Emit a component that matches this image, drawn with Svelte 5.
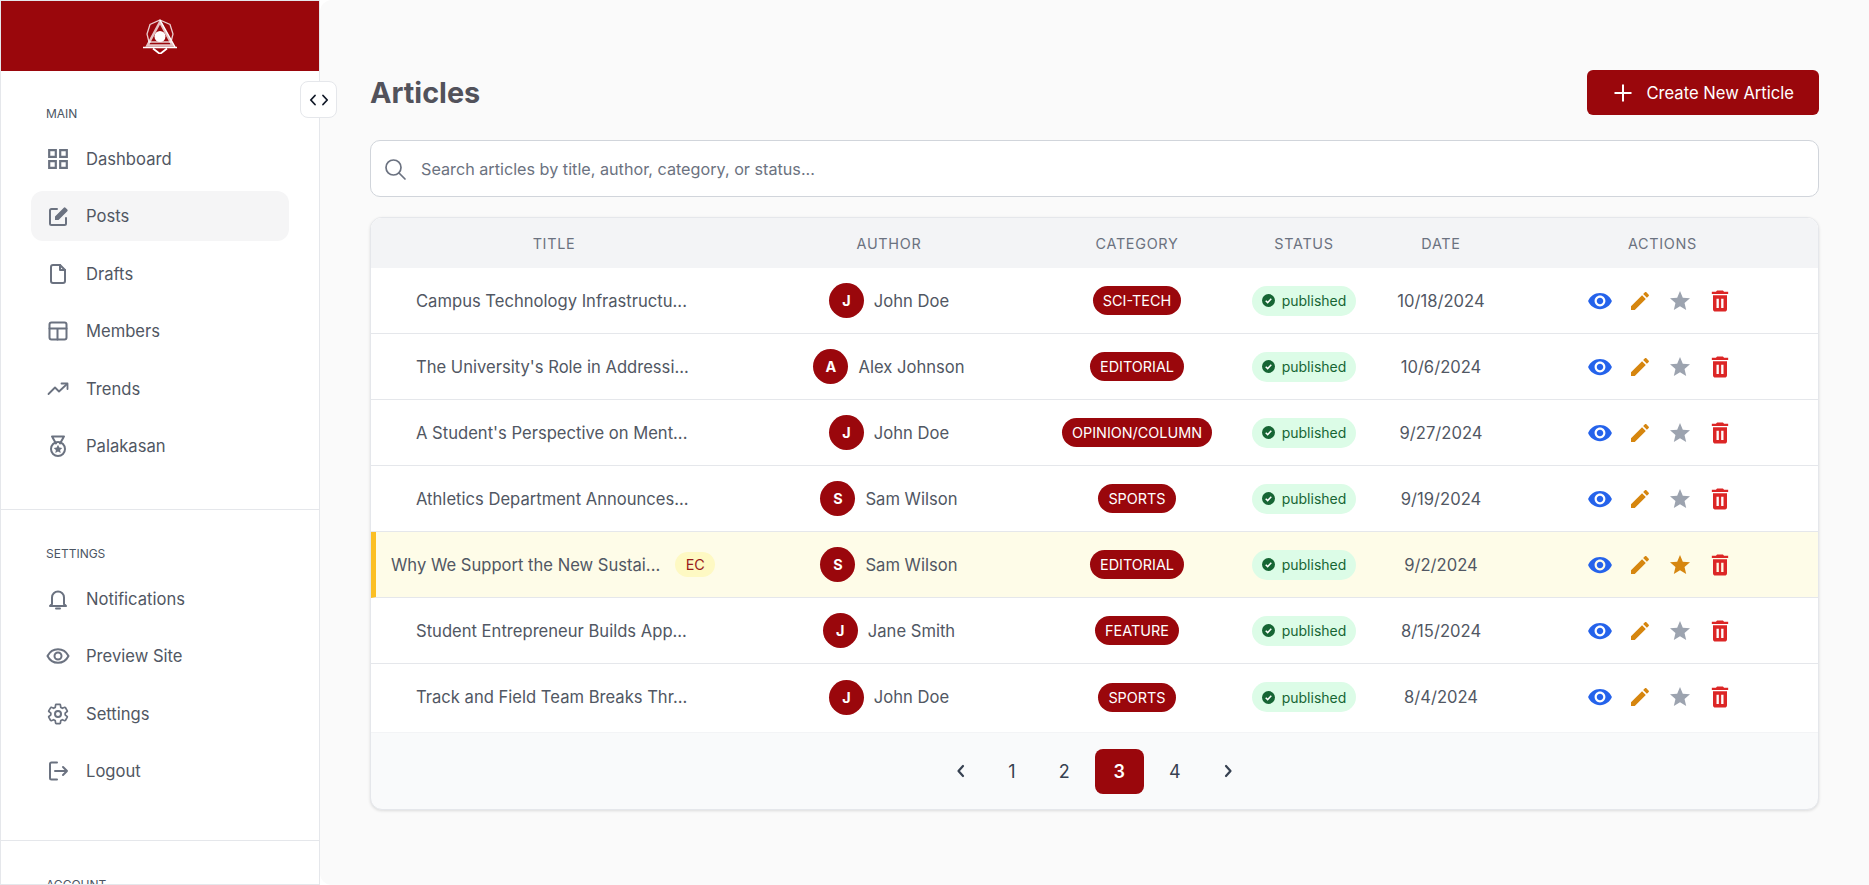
<script>
	const icons = {
		dashboard: '<path transform="translate(-1.2 -1.2) scale(1.1)" fill="currentColor" stroke="none" d="M3 3v8h8V3H3zm6 6H5V5h4v4zm-6 4v8h8v-8H3zm6 6H5v-4h4v4zm4-16v8h8V3h-8zm6 6h-4V5h4v4zm-6 4v8h8v-8h-8zm6 6h-4v-4h4v4z"/>',
		posts: '<path d="M11 5H5.500A1.500 1.500 0 0 0 4 6.500v13A1.500 1.500 0 0 0 5.500 21h13a1.500 1.500 0 0 0 1.500-1.500V14"/><path fill="currentColor" stroke="none" d="M9 12.500V16h3.500L21.300 7.200a1.200 1.200 0 0 0 0-1.700l-1.800-1.800a1.200 1.200 0 0 0-1.700 0z"/>',
		drafts: '<path d="M14 3H7a2 2 0 0 0-2 2v14a2 2 0 0 0 2 2h10a2 2 0 0 0 2-2V8z"/><path d="M14 3v5h5"/>',
		members: '<rect x="3.500" y="3.500" width="17" height="17" rx="2"/><path d="M3.500 9.500h17M11.500 9.500v11"/>',
		trends: '<path stroke-width="1.800" d="M2.500 17l6.500-6.500 4 4L21 7"/><path stroke-width="1.800" d="M15.500 6.500H21.500V12"/>',
		medal: '<path d="M6 2.500h12M6 2.500l4 7M18 2.500l-4 7"/><circle cx="12" cy="15" r="7"/><path fill="currentColor" stroke="none" d="M12 10.800l1.300 2.700 3 .4-2.200 2 .6 3-2.700-1.500-2.700 1.500.6-3-2.200-2 3-.4z"/>',
		bell: '<path d="M6 17V10.500a6 6 0 0 1 12 0V17l2 2H4z"/><path d="M10 21.500h4"/>',
		eye: '<path d="M1.500 12C3.800 7.500 7.500 5.200 12 5.200s8.200 2.300 10.500 6.800c-2.300 4.500-6 6.800-10.500 6.800S3.800 16.500 1.500 12z"/><circle cx="12" cy="12" r="3.500"/>',
		gear: '<path stroke-width="1.700" d="M19.140 12.940c.04-.3.06-.61.06-.94 0-.32-.02-.64-.07-.94l2.030-1.580c.18-.14.23-.41.12-.61l-1.920-3.320c-.12-.22-.37-.29-.59-.22l-2.390.96c-.5-.38-1.030-.7-1.620-.94l-.36-2.540c-.04-.24-.24-.41-.48-.41h-3.840c-.24 0-.43.17-.47.41l-.36 2.540c-.59.24-1.130.57-1.620.94l-2.390-.96c-.22-.08-.47 0-.59.22L2.740 8.870c-.12.21-.08.47.12.61l2.030 1.580c-.05.3-.09.63-.09.94s.02.64.07.94l-2.030 1.580c-.18.14-.23.41-.12.61l1.920 3.320c.12.22.37.29.59.22l2.390-.96c.5.38 1.030.7 1.620.94l.36 2.540c.05.24.24.41.48.41h3.840c.24 0 .44-.17.47-.41l.36-2.540c.59-.24 1.130-.56 1.620-.94l2.390.96c.22.08.47 0 .59-.22l1.920-3.320c.12-.22.07-.47-.12-.61l-2.010-1.580z"/><circle cx="12" cy="12" r="3"/>',
		logout: '<path d="M11 3.500H5.500A1.500 1.500 0 0 0 4 5v14a1.500 1.500 0 0 0 1.500 1.500H11"/><path d="M9 12h12M17 8l4 4-4 4"/>'
	};

	const mainNav = [
		{ label: 'Dashboard', icon: 'dashboard' },
		{ label: 'Posts', icon: 'posts', active: true },
		{ label: 'Drafts', icon: 'drafts' },
		{ label: 'Members', icon: 'members' },
		{ label: 'Trends', icon: 'trends' },
		{ label: 'Palakasan', icon: 'medal' }
	];

	const settingsNav = [
		{ label: 'Notifications', icon: 'bell' },
		{ label: 'Preview Site', icon: 'eye' },
		{ label: 'Settings', icon: 'gear' },
		{ label: 'Logout', icon: 'logout' }
	];

	const articles = [
		{ title: 'Campus Technology Infrastructu...', author: 'John Doe', category: 'SCI-TECH', date: '10/18/2024' },
		{ title: "The University's Role in Addressi...", author: 'Alex Johnson', category: 'EDITORIAL', date: '10/6/2024' },
		{ title: "A Student's Perspective on Ment...", author: 'John Doe', category: 'OPINION/COLUMN', date: '9/27/2024' },
		{ title: 'Athletics Department Announces...', author: 'Sam Wilson', category: 'SPORTS', date: '9/19/2024' },
		{ title: 'Why We Support the New Sustai...', author: 'Sam Wilson', category: 'EDITORIAL', date: '9/2/2024', featured: true },
		{ title: 'Student Entrepreneur Builds App...', author: 'Jane Smith', category: 'FEATURE', date: '8/15/2024' },
		{ title: 'Track and Field Team Breaks Thr...', author: 'John Doe', category: 'SPORTS', date: '8/4/2024' }
	];
</script>

{#snippet navList(items)}
	<ul class="nav-list">
		{#each items as item}
			<li class="nav-item" class:active={item.active}>
				<svg class="nav-icon" viewBox="0 0 24 24" fill="none" stroke="currentColor" stroke-width="2" stroke-linecap="round" stroke-linejoin="round">
					{@html icons[item.icon]}
				</svg>
				<span>{item.label}</span>
			</li>
		{/each}
	</ul>
{/snippet}

<div class="layout">
	<aside class="sidebar">
		<div class="brand">
			<svg class="logo" viewBox="0 0 36 36" fill="none" stroke="#fff" stroke-linejoin="miter">
				<path stroke-width="1.300" opacity="0.8" d="M18 2L28 6.500 31 16 29 24H7L5 16 8 6.500z"/>
				<path stroke-width="2.600" opacity="0.75" d="M18 4L5.500 27.500h25z"/>
				<circle cx="18" cy="18.500" r="5.500" fill="#fff" stroke="none"/>
				<path stroke-width="1.500" d="M18 2l15 27M1 29.500h34"/>
				<path stroke-width="1.800" d="M11 30.500l7 5.500 7-5.500"/>
			</svg>
		</div>

		<section class="nav-section main-section">
			<p class="section-label">MAIN</p>
			{@render navList(mainNav)}
		</section>
		<section class="nav-section settings-section">
			<p class="section-label">SETTINGS</p>
			{@render navList(settingsNav)}
		</section>
		<section class="nav-section">
			<p class="section-label">ACCOUNT</p>
		</section>
	</aside>

	<button class="collapse" aria-label="Toggle sidebar">
		<svg viewBox="0 0 20 14" width="20" height="14" fill="none" stroke="#111827" stroke-width="1.800" stroke-linecap="round" stroke-linejoin="round">
			<path d="M6 2.500L1.800 7 6 11.500M14 2.500L18.200 7 14 11.500"/>
		</svg>
	</button>

	<main class="content">
		<header class="page-head">
			<h1>Articles</h1>
			<button class="create-btn">
				<svg viewBox="0 0 18 18" width="18" height="18" fill="none" stroke="#fff" stroke-width="2">
					<path d="M9 0.500v17M0.500 9h17"/>
				</svg>
				Create New Article
			</button>
		</header>

		<label class="search">
			<svg viewBox="0 0 24 24" width="24" height="24" fill="none" stroke="#6b7280" stroke-width="1.700" stroke-linecap="round">
				<circle cx="10.500" cy="10.500" r="7.500"/>
				<path d="M16 16l6 6"/>
			</svg>
			<input type="text" placeholder="Search articles by title, author, category, or status..." />
		</label>

		<div class="table-card">
			<div class="table-body">
				<table>
					<colgroup>
						<col style="width: 366px" />
						<col style="width: 304px" />
						<col style="width: 192px" />
						<col style="width: 142px" />
						<col style="width: 132px" />
						<col />
					</colgroup>
					<thead>
						<tr>
							<th>TITLE</th>
							<th>AUTHOR</th>
							<th>CATEGORY</th>
							<th>STATUS</th>
							<th>DATE</th>
							<th>ACTIONS</th>
						</tr>
					</thead>
					<tbody>
						{#each articles as a}
							<tr class:featured={a.featured}>
								<td class="title-cell">
									<div class="title-wrap">
										<span>{a.title}</span>
										{#if a.featured}<span class="ec">EC</span>{/if}
									</div>
								</td>
								<td>
									<div class="author">
										<span class="avatar">{a.author[0]}</span>
										<span>{a.author}</span>
									</div>
								</td>
								<td><span class="category">{a.category}</span></td>
								<td>
									<span class="status">
										<svg viewBox="0 0 14 14" width="13" height="13">
											<circle cx="7" cy="7" r="7" fill="#166534" />
											<path d="M4 7.200l2.100 2.100L10 5.200" fill="none" stroke="#fff" stroke-width="1.600" />
										</svg>
										published
									</span>
								</td>
								<td class="date">{a.date}</td>
								<td>
									<div class="actions">
										<button aria-label="View">
											<svg viewBox="0 0 24 24" width="26" height="26" fill="#2563eb">
												<path d="M12 4.500C7 4.500 2.730 7.610 1 12c1.730 4.390 6 7.500 11 7.500s9.270-3.110 11-7.500c-1.730-4.390-6-7.500-11-7.500zM12 17c-2.760 0-5-2.240-5-5s2.240-5 5-5 5 2.240 5 5-2.240 5-5 5zm0-8c-1.660 0-3 1.340-3 3s1.340 3 3 3 3-1.340 3-3-1.340-3-3-3z" />
											</svg>
										</button>
										<button aria-label="Edit">
											<svg viewBox="0 0 24 24" width="24" height="24" fill="#d6860f">
												<path d="M3 17.250V21h3.750L17.810 9.940l-3.750-3.750L3 17.250zM20.710 7.040c.39-.39.39-1.020 0-1.410l-2.340-2.340c-.39-.39-1.020-.39-1.410 0l-1.830 1.830 3.750 3.750 1.830-1.830z" />
											</svg>
										</button>
										<button aria-label="Feature">
											<svg viewBox="0 0 24 24" width="24" height="24" fill={a.featured ? '#d6860f' : '#9ca3af'}>
												<path d="M12 17.270L18.180 21l-1.640-7.030L22 9.240l-7.190-.61L12 2 9.190 8.630 2 9.240l5.460 4.730L5.820 21z" />
											</svg>
										</button>
										<button aria-label="Delete">
											<svg viewBox="0 0 24 24" width="28" height="28" fill="#dc2626" fill-rule="evenodd">
												<path d="M6 19c0 1.100.9 2 2 2h8c1.100 0 2-.9 2-2V7H6v12zM9 10h2v8H9zm4 0h2v8h-2zM19 4h-3.500l-1-1h-5l-1 1H5v2h14V4z" />
											</svg>
										</button>
									</div>
								</td>
							</tr>
						{/each}
					</tbody>
				</table>
			</div>

			<nav class="pagination">
				<button class="arrow" aria-label="Previous page">
					<svg viewBox="0 0 16 16" width="16" height="16" fill="none" stroke="#374151" stroke-width="2.200" stroke-linecap="round" stroke-linejoin="round"><path d="M10 3L5.500 8l4.500 5" /></svg>
				</button>
				<button>1</button>
				<button>2</button>
				<button class="current">3</button>
				<button>4</button>
				<button class="arrow" aria-label="Next page">
					<svg viewBox="0 0 16 16" width="16" height="16" fill="none" stroke="#374151" stroke-width="2.200" stroke-linecap="round" stroke-linejoin="round"><path d="M6 3l4.500 5L6 13" /></svg>
				</button>
			</nav>
		</div>
	</main>
</div>

<style>
	:global(body) {
		background: #fff;
		font-family: Inter, 'Noto Sans', sans-serif;
	}

	.layout {
		position: relative;
		display: flex;
		height: 885px;
		overflow: hidden;
	}

	.sidebar {
		box-sizing: border-box;
		flex: 0 0 320px;
		height: 885px;
		overflow: hidden;
		background: #fff;
		border: 1px solid #e5e7eb;
	}

	.brand {
		display: flex;
		justify-content: center;
		align-items: center;
		height: 70px;
		background: #9a070c;
	}

	.logo {
		width: 36px;
		height: 36px;
	}

	.nav-section {
		padding: 36px 30px 0;
		border-bottom: 1px solid #e5e7eb;
	}

	.main-section {
		padding-top: 35px;
		padding-bottom: 38px;
	}

	.settings-section {
		padding-bottom: 44px;
	}

	.section-label {
		margin: 0 0 12.500px;
		padding-left: 15px;
		font-size: 12px;
		line-height: 15px;
		color: #4b5563;
	}

	.nav-list {
		display: flex;
		flex-direction: column;
		gap: 7.500px;
		margin: 0;
		padding: 0;
		list-style: none;
	}

	.nav-item {
		display: flex;
		align-items: center;
		gap: 16px;
		height: 50px;
		padding-left: 15px;
		border-radius: 12px;
		font-size: 16.600px;
		color: #515763;
	}

	.nav-item.active {
		background: #f5f5f6;
	}

	.nav-icon {
		flex: none;
		width: 24px;
		height: 24px;
		color: #6b7280;
	}

	.collapse {
		position: absolute;
		top: 81px;
		left: 300px;
		z-index: 2;
		display: flex;
		justify-content: center;
		align-items: center;
		box-sizing: border-box;
		width: 37px;
		height: 37px;
		padding: 0;
		background: #fff;
		border: 1px solid #e5e7eb;
		border-radius: 8px;
	}

	.content {
		flex: 1;
		box-sizing: border-box;
		min-width: 0;
		padding: 70px 50px 0;
		background: #fafafa;
		border-radius: 12px 0 0 12px;
	}

	.page-head {
		display: flex;
		justify-content: space-between;
		align-items: center;
		margin-bottom: 25px;
	}

	h1 {
		margin: 0;
		font-size: 28.800px;
		font-weight: 700;
		color: #52525b;
	}

	.create-btn {
		display: flex;
		align-items: center;
		gap: 14px;
		height: 45px;
		padding: 0 25px 0 27px;
		background: #9a070c;
		border: none;
		border-radius: 6px;
		font: 400 16.600px Inter, sans-serif;
		color: #fff;
	}

	.search {
		display: flex;
		align-items: center;
		gap: 14px;
		box-sizing: border-box;
		height: 57px;
		margin-bottom: 20px;
		padding: 0 12px;
		background: #fff;
		border: 1px solid #d1d5db;
		border-radius: 10px;
	}

	.search input {
		flex: 1;
		padding: 0;
		border: none;
		outline: none;
		background: none;
		font: 16.200px Inter, sans-serif;
		color: #4b5563;
	}

	.search input::placeholder {
		color: #6b7280;
	}

	.table-card {
		overflow: hidden;
		background: #f9fafb;
		border: 1px solid #e5e7eb;
		border-radius: 12px;
		box-shadow: 0 1px 3px rgba(0, 0, 0, 0.12);
	}

	.table-body {
		padding-bottom: 2px;
		background: #fff;
	}

	table {
		width: 100%;
		table-layout: fixed;
		border-collapse: separate;
		border-spacing: 0;
		color: #515763;
		font-size: 16.600px;
	}

	th {
		height: 50px;
		padding: 0;
		background: #f3f4f6;
		font-size: 14.400px;
		font-weight: 400;
		letter-spacing: 0.7px;
		color: #6b7280;
	}

	td {
		box-sizing: border-box;
		height: 66px;
		padding: 0;
		text-align: center;
		border-bottom: 1px solid #e5e7eb;
	}

	tbody tr:last-child td {
		border-bottom: none;
	}

	.featured td {
		background: #fefce8;
	}

	.title-cell {
		text-align: left;
	}

	.title-wrap {
		display: flex;
		align-items: center;
		gap: 15px;
		padding-left: 45px;
	}

	.featured .title-cell {
		border-left: 5px solid #fbbf24;
	}

	.featured .title-wrap {
		padding-left: 15px;
	}

	.ec {
		padding: 0 10.500px;
		line-height: 25px;
		background: #fef9c3;
		border-radius: 13px;
		font-size: 14.400px;
		color: #991b1b;
	}

	.author {
		display: flex;
		justify-content: center;
		align-items: center;
		gap: 10px;
	}

	.avatar {
		display: flex;
		justify-content: center;
		align-items: center;
		width: 35px;
		height: 35px;
		background: #9a070c;
		border-radius: 50%;
		font-size: 14.400px;
		font-weight: 700;
		color: #fff;
	}

	.category {
		display: inline-block;
		padding: 0 10px;
		line-height: 29px;
		background: #9a070c;
		border-radius: 15px;
		font-size: 14.400px;
		font-weight: 400;
		color: #fff;
	}

	.status {
		display: inline-flex;
		align-items: center;
		gap: 7px;
		height: 30px;
		padding: 0 10px;
		background: #dcfce7;
		border-radius: 15px;
		font-size: 14px;
		color: #166534;
	}

	.actions {
		display: flex;
		justify-content: center;
		padding-right: 5px;
	}

	.actions button {
		display: flex;
		justify-content: center;
		align-items: center;
		width: 40px;
		height: 40px;
		padding: 0;
		background: none;
		border: none;
	}

	.pagination {
		display: flex;
		justify-content: center;
		align-items: center;
		gap: 7px;
		height: 76px;
		border-top: 1px solid #f3f4f6;
	}

	.pagination button {
		display: flex;
		justify-content: center;
		align-items: center;
		height: 45px;
		padding: 0 18px;
		background: none;
		border: none;
		border-radius: 8px;
		font: 400 18px Inter, sans-serif;
		color: #374151;
	}

	.pagination .arrow {
		padding: 0 14px;
	}

	.pagination .current {
		padding: 0 19px;
		background: #9a070c;
		font-weight: 600;
		color: #fff;
	}
</style>
